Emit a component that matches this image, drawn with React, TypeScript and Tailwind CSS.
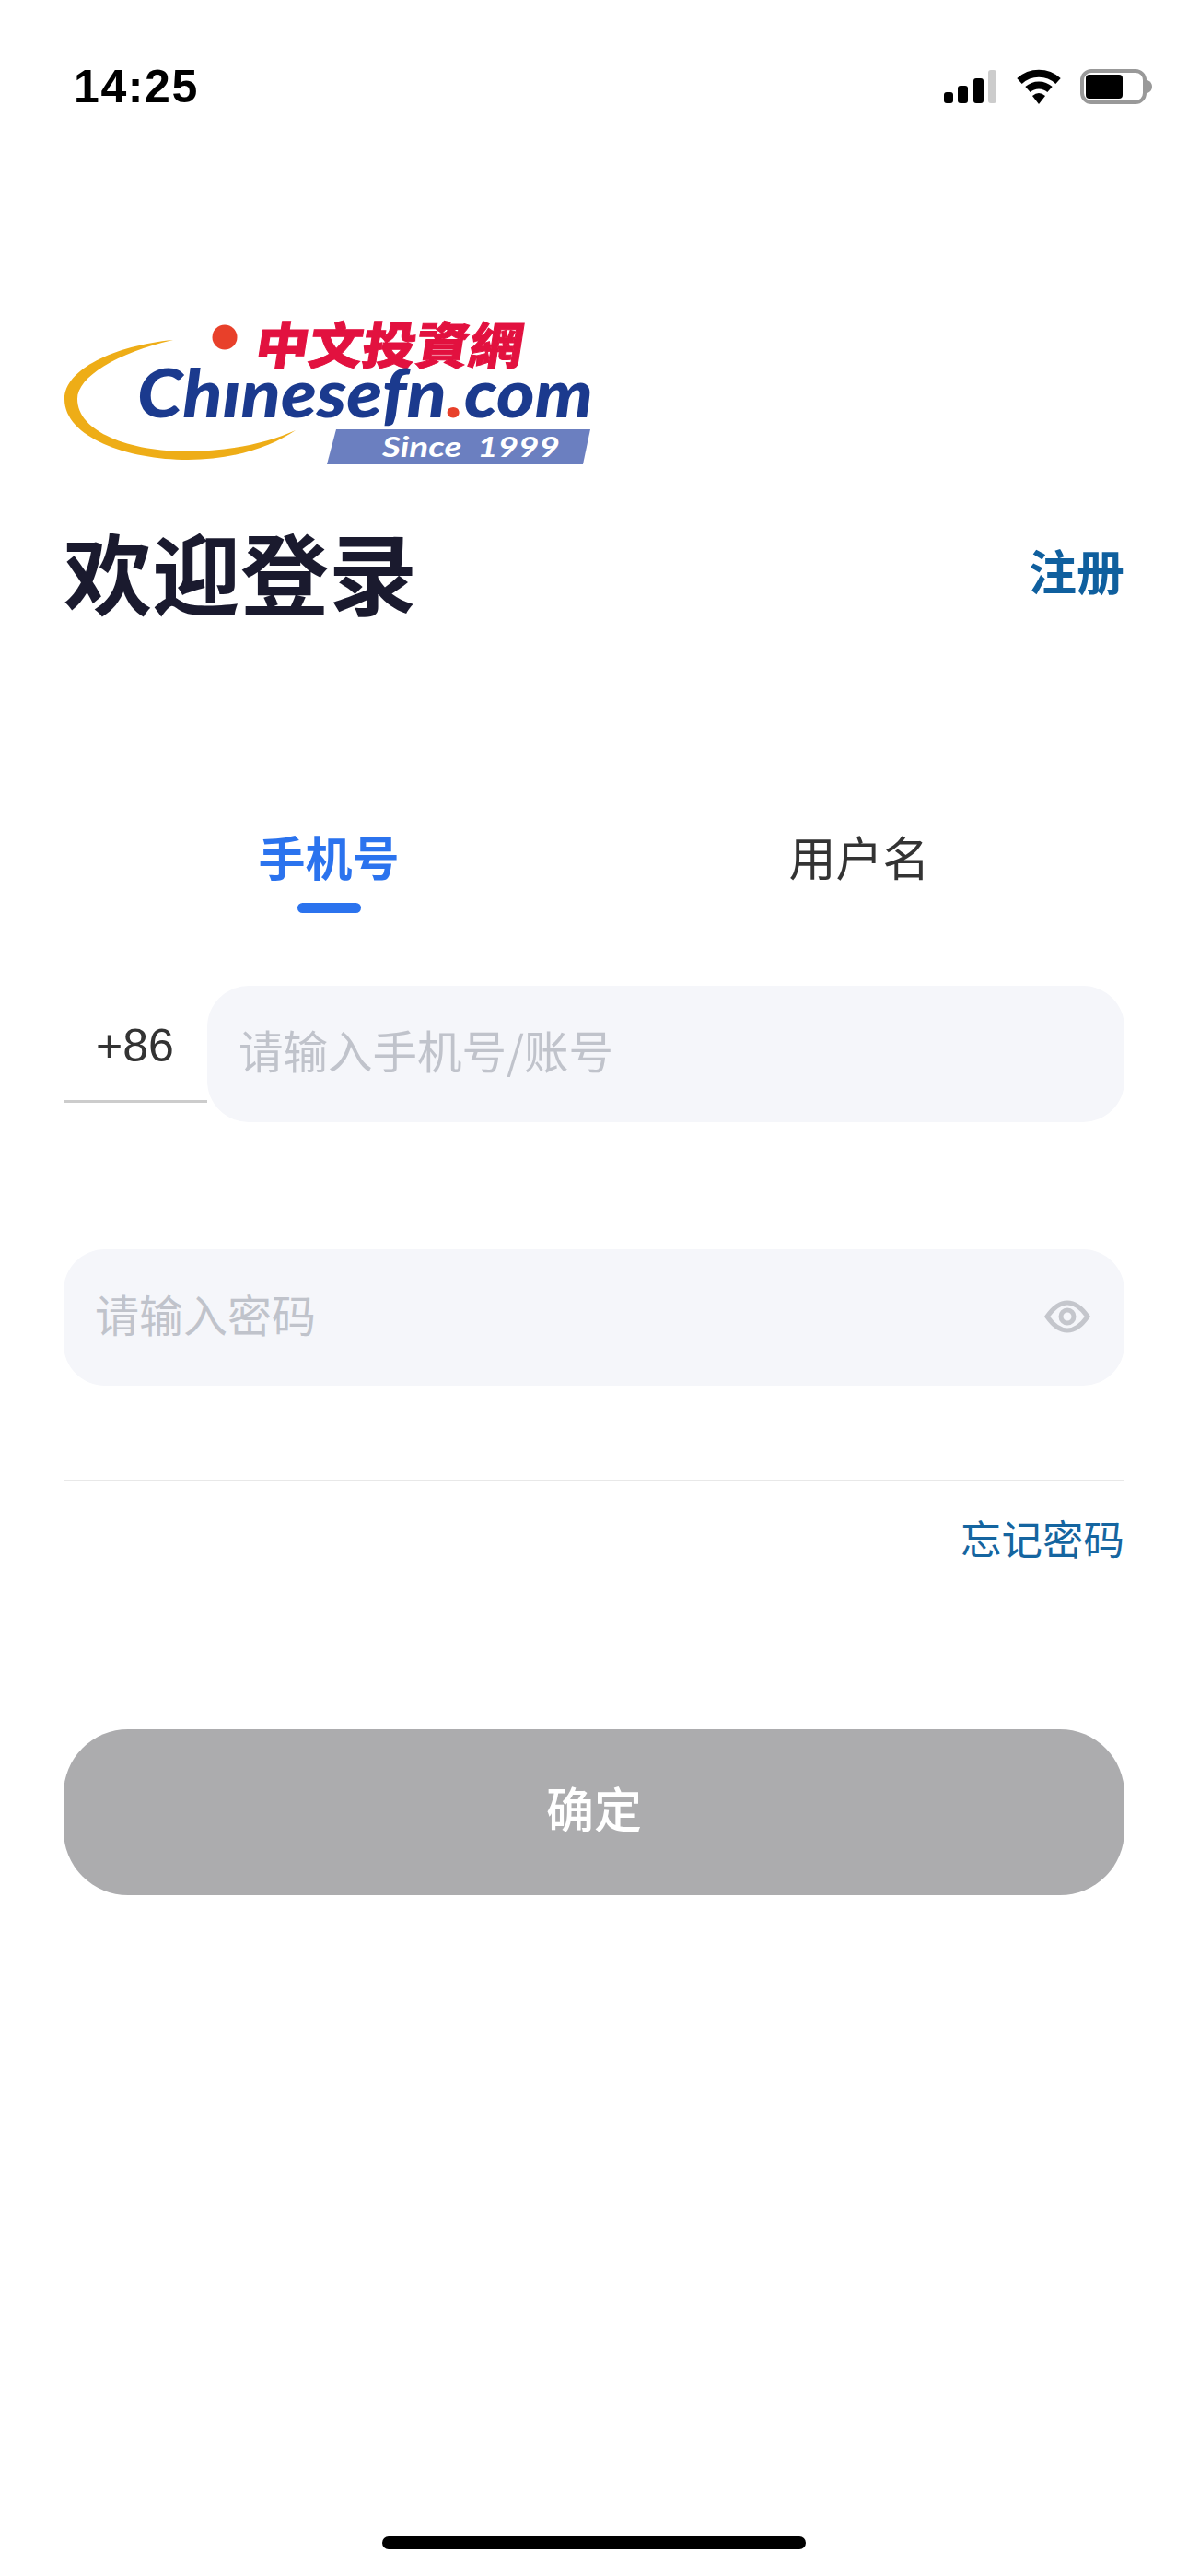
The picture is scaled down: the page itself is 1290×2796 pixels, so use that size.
import { useState } from 'react';

const cjk = { fontFamily: '"Noto Sans CJK SC", sans-serif' };

function StatusIcons() {
  return (
    <div className="flex items-center">
      {/* Signal */}
      <svg width="58" height="38" viewBox="0 0 58 38">
        <rect x="1" y="25" width="10" height="12" rx="3" fill="#000" />
        <rect x="16" y="18" width="11" height="19" rx="3" fill="#000" />
        <rect x="33" y="10" width="11" height="27" rx="3" fill="#000" />
        <rect x="49" y="1" width="9" height="36" rx="3" fill="#ccc" />
      </svg>
      {/* Wifi */}
      <svg className="ml-[21px]" width="50" height="38" viewBox="0 0 50 38">
        <path d="M4 13 A31 31 0 0 1 46 13" fill="none" stroke="#000" strokeWidth="8" />
        <path d="M13 22 A18 18 0 0 1 37 22" fill="none" stroke="#000" strokeWidth="8" />
        <path d="M18 29 Q25 23 32 29 L25 38 Z" fill="#000" />
      </svg>
      {/* Battery */}
      <svg className="ml-[20px]" width="78" height="38" viewBox="0 0 78 38">
        <rect x="2" y="2" width="68" height="34" rx="10" fill="none" stroke="#999" strokeWidth="4" />
        <rect x="6" y="6" width="40" height="26" rx="4" fill="#000" />
        <path d="M73 12 Q78 14 78 19 Q78 24 73 26 Z" fill="#999" />
      </svg>
    </div>
  );
}

function Logo() {
  return (
    <svg width="580" height="172" viewBox="0 -10 580 172" className="block">
      <path
        d="M119 24 C55 30 1 56 1 88 C1 130 70 154 135 154 C185 154 225 140 252 122 C222 136 178 145 135 145 C72 145 15 124 15 88 C15 64 58 38 119 24 Z"
        fill="#eead17"
      />
      <circle cx="175" cy="21" r="13.5" fill="#e8402a" />
      <text
        x="0"
        y="50"
        transform="translate(214 0) skewX(-9)"
        textLength="290"
        lengthAdjust="spacingAndGlyphs"
        fontSize="54"
        fontWeight="900"
        fill="#e2113f"
        stroke="#e2113f"
        strokeWidth="1"
        style={{ fontFamily: '"Noto Sans CJK TC", sans-serif' }}
      >
        中文投資網
      </text>
      <text
        x="80"
        y="108"
        textLength="495"
        lengthAdjust="spacingAndGlyphs"
        fontSize="72"
        fontWeight="900"
        fontStyle="italic"
        fill="#1b3a8e"
        style={{ fontFamily: 'Lato, sans-serif' }}
      >
        Chınesefn<tspan fill="#e8402a">.</tspan>com
      </text>
      <polygon points="286,159 296,121 572,121 564,159" fill="#6b7fc0" />
      <text
        x="346"
        y="151"
        textLength="193"
        lengthAdjust="spacingAndGlyphs"
        fontSize="30"
        fontWeight="700"
        fontStyle="italic"
        fill="#fff"
        className="whitespace-pre"
        style={{ fontFamily: 'Lato, sans-serif' }}
      >
        Since  1999
      </text>
    </svg>
  );
}

export default function App() {
  const [tab, setTab] = useState<'phone' | 'user'>('phone');

  return (
    <div className="flex h-[2796px] w-[1290px] flex-col overflow-hidden bg-white" style={cjk}>
      {/* Status bar */}
      <div className="flex h-[40px] items-center justify-between pl-[80px] pr-[39px] mt-[74px]">
        <span className="text-[50px] font-bold leading-none tracking-[1.6px] text-black [font-family:'Liberation_Sans',sans-serif]">14:25</span>
        <StatusIcons />
      </div>

      <div className="flex flex-1 flex-col px-[69px]">
        <div className="mt-[221px]">
          <Logo />
        </div>

        <div className="mt-[71px] flex h-[94px] items-center justify-between pb-[12px]">
          <h1 className="text-[96px] font-bold leading-none text-[#1a1a2e]">欢迎登录</h1>
          <button className="text-[52px] font-bold leading-none text-[#0f5f9e]">注册</button>
        </div>

        {/* Tabs */}
        <div className="mt-[232px] grid grid-cols-2">
          <button onClick={() => setTab('phone')} className="flex flex-col items-center">
            <span className={`text-[51px] leading-[50px] ${tab === 'phone' ? 'font-bold text-[#2b73ee]' : 'text-[#333]'}`}>手机号</span>
            <span className={`mt-[26px] h-[11px] w-[69px] rounded-full ${tab === 'phone' ? 'bg-[#2b73ee]' : 'bg-transparent'}`} />
          </button>
          <button onClick={() => setTab('user')} className="flex flex-col items-center">
            <span className={`text-[51px] leading-[50px] ${tab === 'user' ? 'font-bold text-[#2b73ee]' : 'text-[#333]'}`}>用户名</span>
            <span className={`mt-[26px] h-[11px] w-[69px] rounded-full ${tab === 'user' ? 'bg-[#2b73ee]' : 'bg-transparent'}`} />
          </button>
        </div>

        {/* Phone */}
        <div className="mt-[79px] flex h-[148px]">
          <div className="h-[127px] w-[156px] border-b-[3px] border-[#ccc] pt-[37px] pl-[35px] text-[50px] leading-[56px] text-[#333] [font-family:'Liberation_Sans',sans-serif]">
            +86
          </div>
          <input
            readOnly
            placeholder="请输入手机号/账号"
            className="h-full min-w-0 flex-1 rounded-[45px] bg-[#f5f6fa] pb-[10px] pl-[34px] text-[48.5px] outline-none placeholder:text-[#c0c3cb]"
          />
        </div>

        {/* Password */}
        <div className="mt-[138px] flex h-[148px] items-center justify-between rounded-[45px] bg-[#f5f6fa] pl-[34px] pr-[37px]">
          <input
            readOnly
            placeholder="请输入密码"
            className="min-w-0 flex-1 bg-transparent pb-[10px] text-[48px] outline-none placeholder:text-[#c0c3cb]"
          />
          <svg className="-mt-[3px]" width="50" height="36" viewBox="0 0 50 36" fill="none" stroke="#c4c6cc" strokeWidth="5">
            <path d="M3 18 C10 8 17 3 25 3 C33 3 40 8 47 18 C40 28 33 33 25 33 C17 33 10 28 3 18 Z" />
            <circle cx="25" cy="18" r="7" />
          </svg>
        </div>

        <div className="mt-[102px] h-[2px] bg-[#e8e8e8]" />

        <div className="mt-[39px] flex justify-end">
          <button className="text-[44.5px] leading-[44px] text-[#1565a0]">忘记密码</button>
        </div>

        <button className="mt-[186px] h-[180px] w-full rounded-[70px] bg-[#acacae] pb-[10px] text-[52px] font-medium text-white">
          确定
        </button>

        {/* Home indicator */}
        <div className="mt-auto mb-[29px] h-[14px] w-[460px] self-center rounded-full bg-black" />
      </div>
    </div>
  );
}
